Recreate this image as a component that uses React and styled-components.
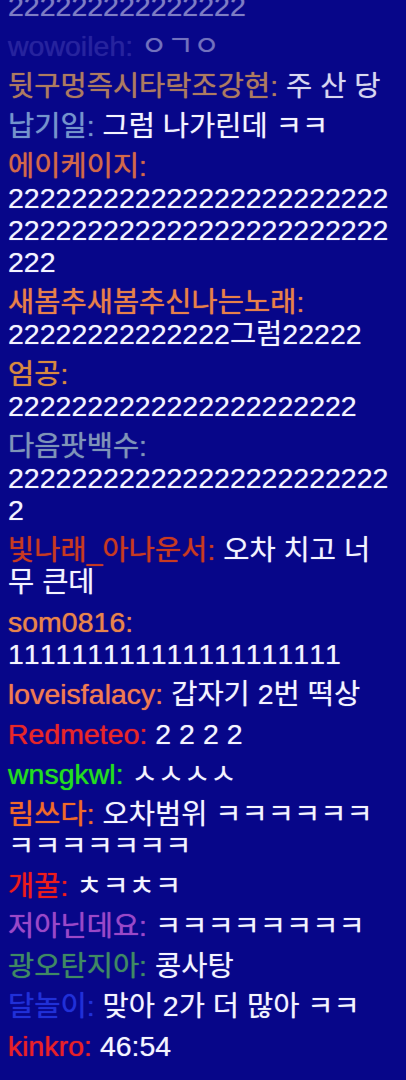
import React from "react";
import styled, { createGlobalStyle } from "styled-components";

const GlobalStyle = createGlobalStyle`
  html, body {
    margin: 0;
    padding: 0;
    background: #070689;
  }
`;

const twos = (n) => "2".repeat(n);

const messages = [
  { name: "sksmsqkqh", color: "#8a7ae0", text: twos(39), fade: 0.5 },
  { name: "wowoileh", color: "#4d46b8", text: "ㅇㄱㅇ", fade: 0.45 },
  { name: "뒷구멍즉시타락조강현", color: "#c48c5c", text: "주 산 당", fade: 0.88 },
  { name: "납기일", color: "#7494cc", text: "그럼 나가린데 ㅋㅋ" },
  { name: "에이케이지", color: "#d2684a", text: twos(51) },
  { name: "새봄추새봄추신나는노래", color: "#e8804a", text: twos(14) + "그럼" + twos(5) },
  { name: "엄공", color: "#d88a40", text: twos(22) },
  { name: "다음팟백수", color: "#7e94b8", text: twos(25) },
  { name: "빛나래_아나운서", color: "#c83a22", text: "오차 치고 너무 큰데" },
  { name: "som0816", color: "#e8844c", text: "1".repeat(21) },
  { name: "loveisfalacy", color: "#f07a52", text: "갑자기 2번 떡상" },
  { name: "Redmeteo", color: "#e8262a", text: "2 2 2 2" },
  { name: "wnsgkwl", color: "#22dd22", text: "ㅅㅅㅅㅅ" },
  { name: "림쓰다", color: "#f06a2a", text: "오차범위 " + "ㅋ".repeat(13) },
  { name: "개꿀", color: "#ee1c1c", text: "ㅊㅋㅊㅋ" },
  { name: "저아닌데요", color: "#9a48c8", text: "ㅋ".repeat(8) },
  { name: "광오탄지아", color: "#3f8a64", text: "콩사탕" },
  { name: "달놀이", color: "#2030d8", text: "맞아 2가 더 많아 ㅋㅋ" },
  { name: "kinkro", color: "#e8202a", text: "46:54" },
];

const Chat = styled.div`
  height: 100vh;
  overflow: hidden;
  display: flex;
  flex-direction: column;
  justify-content: flex-end;
  gap: 8px;
  padding: 0 10px 18px 8px;
  box-sizing: border-box;
  font-family: "Liberation Sans", "Noto Sans CJK KR", sans-serif;
  font-size: 28.5px;
  line-height: 32px;
  font-kerning: none;
`;

const Line = styled.div`
  flex-shrink: 0;
  overflow-wrap: break-word;
  opacity: ${(p) => p.$fade ?? 1};
`;

const Name = styled.span`
  color: ${(p) => p.$color};
  text-shadow: 0 0 1px ${(p) => p.$color};
`;

const Text = styled.span`
  color: #f4f4ff;
  text-shadow: 0 0 1px rgba(244, 244, 255, 0.6);
`;

export default function App() {
  return (
    <>
      <GlobalStyle />
      <Chat>
        {messages.map((m, i) => (
          <Line key={i} $fade={m.fade}>
            <Name $color={m.color}>{m.name}:</Name> <Text>{m.text}</Text>
          </Line>
        ))}
      </Chat>
    </>
  );
}
